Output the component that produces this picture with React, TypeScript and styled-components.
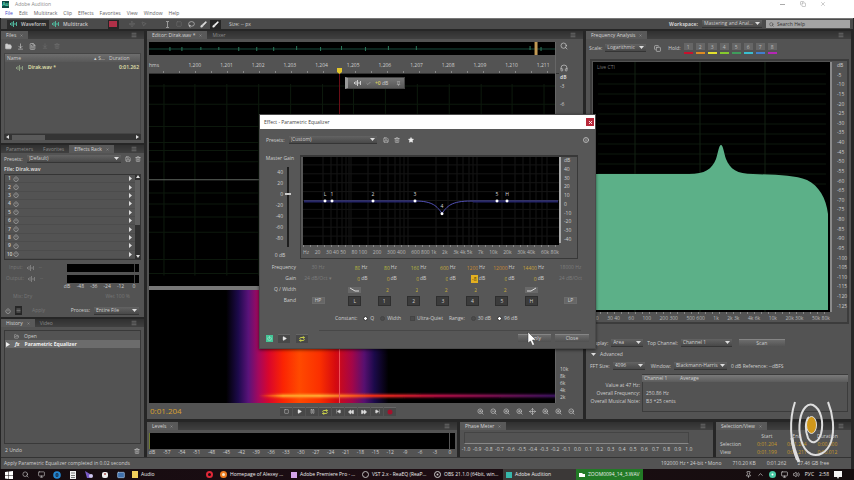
import React from "react";
import styled, { createGlobalStyle, css } from "styled-components";
import {
  ArrowDownToLine, Brush, Check, ChevronUp, Copy, FastForward, FileText, FolderOpen, Headphones, Keyboard,
  Lasso, MousePointer2, Move, Pin, Play, Power, Repeat, Rewind, Save, Search, SkipBack, SkipForward,
  Square, Star, Trash2, Volume2, X, ZoomIn, ZoomOut, Pause, Monitor, Menu, Info,
} from "lucide-react";

const GlobalStyle = createGlobalStyle`
  * { box-sizing: border-box; }
  body { margin: 0; background: #111; overflow: hidden; }
  body, button, input, select, table {
    font-family: "Open Sans", "Noto Sans", sans-serif;
    font-size: 5px;
    line-height: 7px;
    color: #cfcfcf;
  }
  button, input, select { margin: 0; padding: 0; border: 0; background: none; }
  ul, ol { margin: 0; padding: 0; list-style: none; }
  svg { display: block; flex: none; }
`;

const Window = styled.div`
  min-height: 100vh;
  display: flex;
  flex-direction: column;
  background: #262626;
`;

const TitleBar = styled.header`
  display: flex;
  align-items: center;
  gap: 6px;
  height: 8px;
  padding: 0 28px 0 2px;
  background: #fff;
  color: #8a8a8a;
`;

const AppMark = styled.span`
  width: 7px;
  height: 7px;
  background: #0d4a44;
  color: #58d6b4;
  font-weight: 700;
  text-align: center;
`;

const WindowButtons = styled.div`
  display: flex;
  gap: 14px;
  margin-left: auto;
`;

const WindowButton = styled.button`
  width: 6px;
  height: 6px;
  color: #999;
`;

const MenuBar = styled.nav`
  display: flex;
  align-items: center;
  gap: 6px;
  height: 10px;
  padding: 0 5px;
  background: #fff;
`;

const MenuLink = styled.a<{ $first?: boolean }>`
  color: ${(p) => (p.$first ? "#4a4ac8" : "#606060")};
  text-decoration: none;
`;

const Toolbar = styled.div`
  display: flex;
  align-items: center;
  height: 11px;
  margin: 0 1px 2px;
  padding: 0 3px 0 6px;
  border-top: 1px solid #777;
  background: #4b4b4b;
`;

const ModeButton = styled.button<{ $on?: boolean }>`
  display: flex;
  align-items: center;
  gap: 3px;
  height: 9px;
  padding: 0 3px;
  background: ${(p) => (p.$on ? "#2c2c2c" : "transparent")};
  font-weight: 600;
  color: #c8c8c8;
`;

const ToolGroup = styled.div<{ $before?: number }>`
  display: flex;
  align-items: center;
  gap: 1px;
  margin-left: ${(p) => p.$before ?? 0}px;
`;

const ToolButton = styled.button<{ $on?: boolean; $dim?: boolean; $w?: number }>`
  display: flex;
  align-items: center;
  justify-content: center;
  width: ${(p) => p.$w ?? 11}px;
  height: 9px;
  background: ${(p) => (p.$on ? "#262626" : "transparent")};
  color: ${(p) => (p.$dim ? "#737373" : "#d2d2d2")};
`;

const SearchField = styled.label`
  display: flex;
  align-items: center;
  gap: 3px;
  width: 84px;
  height: 8px;
  padding: 0 3px;
  background: #a4a4a4;
  color: #333;
  input { width: 100%; color: #222; outline: none; }
  input::placeholder { color: #333; opacity: 1; }
`;

const Right = styled.div`
  display: flex;
  align-items: center;
  gap: 4px;
  margin-left: auto;
`;

const Workspace = styled.main`
  flex: 1;
  display: flex;
  gap: 3px;
  padding: 0 3px 0 1px;
`;

const Sidebar = styled.div`
  display: flex;
  flex-direction: column;
  gap: 2px;
  flex: 0 0 143px;
`;

const Stage = styled.div`
  flex: 1;
  display: flex;
  flex-direction: column;
  gap: 3px;
  min-width: 0;
`;

const Split = styled.div<{ $grow?: boolean }>`
  display: flex;
  gap: 3px;
  flex: ${(p) => (p.$grow ? "1" : "none")};
  min-height: 0;
`;

const Panel = styled.section<{ $grow?: number; $basis?: number }>`
  display: flex;
  flex-direction: column;
  flex: ${(p) => p.$grow ?? 0} 0 ${(p) => p.$basis ?? 0}px;
  min-width: 0;
  min-height: 0;
  background: #535353;
`;

const TabStrip = styled.div`
  display: flex;
  align-items: stretch;
  flex: none;
  height: 8px;
  padding-right: 7px;
  background: linear-gradient(#303030, #404040);
`;

const Tab = styled.button<{ $on?: boolean }>`
  display: flex;
  align-items: center;
  gap: 4px;
  padding: 0 5px;
  background: ${(p) => (p.$on ? "#595959" : "transparent")};
  color: ${(p) => (p.$on ? "#d4d4d4" : "#8a8a8a")};
`;

const PanelMenu = styled.button`
  margin-left: auto;
  color: #999;
`;

const Row = styled.div<{ $h?: number; $gap?: number; $pad?: string; $dim?: boolean }>`
  display: flex;
  align-items: center;
  flex: none;
  height: ${(p) => p.$h ?? 10}px;
  gap: ${(p) => p.$gap ?? 4}px;
  padding: ${(p) => p.$pad ?? "0 4px"};
  color: ${(p) => (p.$dim ? "#777" : "inherit")};
`;

const SelectBox = styled.span<{ $w: number }>`
  display: inline-grid;
  width: ${(p) => p.$w}px;
  height: 8px;
  align-items: center;
  border-bottom: 1px solid #353535;
  background: linear-gradient(#636363, #484848);
  select {
    grid-area: 1 / 1;
    width: 100%;
    padding-left: 2px;
    appearance: none;
    outline: none;
    color: #cfcfcf;
  }
  svg {
    grid-area: 1 / 1;
    justify-self: end;
    margin-right: 2px;
    pointer-events: none;
  }
`;

const FileTable = styled.table`
  flex: 1;
  display: flex;
  flex-direction: column;
  margin: 0 3px;
  border: 1px solid #454545;
  text-align: left;
  tr { display: grid; grid-template-columns: 1fr 15px 31px; align-items: center; }
  th, td { padding: 0; font-weight: 400; }
  thead tr { height: 8px; background: linear-gradient(#6e6e6e, #585858); }
  th:first-child { padding-left: 2px; }
  tbody tr { height: 11px; color: #e3e2ae; }
  tbody td { font-weight: 600; }
  td:first-child { display: flex; gap: 4px; align-items: center; padding-left: 11px; }
  td:last-child { text-align: right; padding-right: 1px; }
`;

const ScrollTrack = styled.div`
  display: flex;
  justify-content: space-between;
  align-items: center;
  flex: none;
  height: 6px;
  margin: 0 3px 3px;
  padding: 0 2px;
  background: #343434;
`;

const ScrollThumb = styled.span`
  flex: 0 0 33px;
  height: 5px;
  margin: 0 auto 0 3px;
  background: #5a5a5a;
`;

const Rack = styled.div`
  display: grid;
  grid-template-columns: 1fr 5px;
  flex: none;
  height: 86px;
  margin: 0 3px;
  border: 1px solid #343434;
`;

const RackList = styled.ol`
  display: grid;
  grid-template-rows: repeat(10, 1fr);
`;

const RackRow = styled.li`
  display: grid;
  grid-template-columns: 7px 8px 1fr 6px;
  align-items: center;
  padding-left: 1px;
  border-bottom: 1px solid #4c4c4c;
  font-weight: 600;
  span { text-align: center; }
`;

const RackScroll = styled.div`
  display: flex;
  flex-direction: column;
  justify-content: space-between;
  align-items: center;
  background: #303030;
`;

const RackThumb = styled.span`
  width: 5px;
  height: 45px;
  margin: 1px 0 auto;
  background: #606060;
`;

const MeterBar = styled.span`
  flex: 0 0 73px;
  height: 8px;
  margin-left: auto;
  border-right: 1px solid #555;
  background: #000;
  box-shadow: inset -4px 0 0 #000, inset -5px 0 0 #444;
`;

const ScaleRow = styled.div<{ $ml?: number; $mr?: number; $h?: number }>`
  display: flex;
  justify-content: space-between;
  flex: none;
  height: ${(p) => p.$h ?? 7}px;
  margin: 0 ${(p) => p.$mr ?? 0}px 0 ${(p) => p.$ml ?? 0}px;
  span { width: 0; display: flex; justify-content: center; white-space: nowrap; }
`;

const HistoryList = styled.ul`
  flex: 1;
  margin: 3px 3px 0;
  padding-top: 1px;
  border: 1px solid #393939;
`;

const HistoryItem = styled.li<{ $on?: boolean }>`
  display: flex;
  align-items: center;
  gap: 5px;
  height: 8px;
  padding-left: ${(p) => (p.$on ? 1 : 9)}px;
  background: ${(p) => (p.$on ? "#6c6c6c" : "transparent")};
  font-weight: ${(p) => (p.$on ? 700 : 400)};
  color: ${(p) => (p.$on ? "#f0f0f0" : "#cfcfcf")};
`;

const EditorGrid = styled.div`
  flex: 1;
  display: grid;
  grid-template-columns: 1fr 28px;
  grid-template-rows: 13px 19px 211fr 4px 113fr;
  padding: 3px 0 0 2px;
  min-height: 0;
`;

const Overview = styled.div`
  background: #000;
  min-width: 0;
  contain: size;
  svg { width: 100%; height: 13px; }
`;

const Ruler = styled.div`
  display: flex;
  align-items: flex-end;
  margin-right: -4px;
  padding-bottom: 4px;
  background: repeating-linear-gradient(90deg, transparent 0 14px, #888 14px 15px, transparent 15px 16px) 0 100% / 100% 2px no-repeat;
  border-bottom: 1px solid #333;
  span { flex: 1; text-align: center; }
  span:first-child { flex: 0 0 30px; text-align: left; }
`;

const Canvas = styled.div`
  min-width: 0;
  min-height: 0;
  background: #000;
  overflow: hidden;
  contain: size;
  svg { width: 100%; height: 100%; }
`;

const Divider = styled.div`
  grid-column: 1 / 2;
  background: #777;
`;

const SideCell = styled.div<{ $end?: boolean }>`
  display: flex;
  flex-direction: column;
  align-items: flex-start;
  justify-content: ${(p) => (p.$end ? "flex-end" : "flex-start")};
  gap: ${(p) => (p.$end ? 0 : 2)}px;
  padding: 0 0 2px 4px;
  border-left: 1px solid #666;
`;

const TransportBar = styled.div`
  display: flex;
  align-items: center;
  flex: none;
  height: 16px;
  padding: 0 6px 0 3px;
`;

const Time = styled.output`
  flex: 0 0 130px;
  font-size: 8px;
  line-height: 10px;
  color: #d9a030;
`;

const KeyButton = styled.button`
  display: flex;
  align-items: center;
  justify-content: center;
  width: 12px;
  height: 9px;
  margin-right: 1px;
  background: #484848;
  border-top: 1px solid #666;
  color: #dadada;
`;

const Hud = styled.div`
  position: absolute;
  left: 345px;
  top: 77px;
  width: 60px;
  height: 12px;
  display: flex;
  align-items: center;
  gap: 4px;
  padding: 0 3px 0 6px;
  border: 1px solid #444;
  border-left: 3px solid #999;
  background: linear-gradient(#757575, #585858);
  b { color: #d8c860; font-weight: 600; }
`;

const PlayheadMark = styled.svg`
  position: absolute;
  left: 337px;
  top: 68px;
`;

const AnalysisFrame = styled.div`
  flex: 1;
  display: grid;
  grid-template-columns: 1fr 17px;
  grid-template-rows: 1fr 10px;
  margin: 2px 2px 0 4px;
  padding: 1px 0 0 1px;
  border: 2px solid #3c3c3c;
  min-height: 0;
`;

const DbScale = styled.div`
  display: flex;
  flex-direction: column;
  justify-content: space-between;
  padding: 0 0 3px 5px;
  border-left: 2px solid #8a8a8a;
  line-height: 6px;
  min-height: 0;
`;

const Swatch = styled.button<{ $c: string }>`
  width: 9px;
  margin-right: 2px;
  border-bottom: 2px solid ${(p) => p.$c};
  background: linear-gradient(#666 7px, #535353 7px);
  background-clip: padding-box;
  line-height: 9px;
  color: #bbb;
`;

const PushButton = styled.button<{ $w: number }>`
  width: ${(p) => p.$w}px;
  height: 8px;
  border-top: 1px solid #858585;
  background: linear-gradient(#6c6c6c, #515151);
`;

const ReadoutTable = styled.table`
  display: flex;
  flex-direction: column;
  flex: none;
  margin: 2px 3px 0 2px;
  tr { display: grid; grid-template-columns: 54px 36px 1fr; height: 8px; }
  th, td { padding: 0; font-weight: 400; text-align: left; white-space: nowrap; }
  tbody th { padding-right: 2px; text-align: right; }
  thead th { padding-left: 2px; background: linear-gradient(#7a7a7a, #5c5c5c); border-top: 1px solid #3c3c3c; }
  thead th:first-child { background: none; border: 0; }
  td { padding-left: 3px; }
  td:nth-child(2) { border-left: 1px solid #3c3c3c; }
  td:last-child { border-right: 1px solid #3c3c3c; }
  tbody tr:last-child { height: 14px; }
  tbody tr:last-child td { border-bottom: 1px solid #3c3c3c; }
`;

const LevelMeter = styled.div`
  height: 16px;
  margin: 3px 2px 0;
  border-left: 1px solid #6e7a2a;
  background: linear-gradient(90deg, transparent calc(100% - 6px), #555 calc(100% - 6px) calc(100% - 5px), transparent calc(100% - 5px)) #000;
`;

const PhaseTrack = styled.div`
  height: 12px;
  margin: 2px 24px 2px 4px;
  border: 1px solid #444;
  border-bottom-color: #888;
`;

const SelectionTable = styled.table`
  margin: 2px 8px 0 4px;
  border-spacing: 0;
  th, td { padding: 0; height: 8px; font-weight: 400; text-align: center; }
  tbody th { text-align: left; }
  td { color: #c79a2c; }
`;

const StatusBar = styled.footer`
  display: flex;
  align-items: center;
  gap: 11px;
  flex: none;
  height: 12px;
  margin: 0 3px 0 1px;
  padding: 0 22px 0 3px;
  border-top: 1px solid #333;
  background: #535353;
  span:first-child { margin-right: auto; }
`;

const Taskbar = styled.nav`
  display: flex;
  align-items: center;
  flex: none;
  height: 11px;
  padding-left: 1px;
  background: linear-gradient(90deg, #150c10, #1d0d13 50%, #140d0e);
  color: #e8e8e8;
`;

const TaskIcon = styled.button`
  display: flex;
  justify-content: center;
  align-items: center;
  flex: 0 1 auto;
  width: 16px;
  height: 11px;
`;

const TaskButton = styled.button<{ $w: number; $bg?: string }>`
  display: flex;
  align-items: center;
  gap: 3px;
  flex: 0 0 ${(p) => p.$w}px;
  height: 11px;
  padding: 0 3px;
  background: ${(p) => p.$bg ?? "transparent"};
  color: #eee;
  white-space: nowrap;
`;

const Tray = styled.div`
  display: flex;
  align-items: center;
  gap: 5px;
  margin-left: auto;
  padding-right: 12px;
`;

const Dialog = styled.section`
  position: absolute;
  left: 260px;
  top: 115px;
  width: 335px;
  display: flex;
  flex-direction: column;
  background: #575757;
  box-shadow: 0 0 0 1px #4a4a4a, 0 1px 3px 1px rgba(0, 0, 0, 0.6);
`;

const DialogTitle = styled.header`
  display: flex;
  align-items: center;
  justify-content: space-between;
  height: 14px;
  padding: 0 1px 0 4px;
  background: #fff;
  color: #444;
`;

const CloseBox = styled.button`
  display: flex;
  align-items: center;
  justify-content: center;
  width: 8px;
  height: 8px;
  background: #b8283a;
  color: #fff;
`;

const EqBody = styled.div`
  display: grid;
  grid-template-columns: 40px 1fr 17px;
  margin-top: 4px;
`;

const GainColumn = styled.div`
  display: flex;
  flex-direction: column;
  align-items: center;
  height: 104px;
  span { white-space: nowrap; }
`;

const GainTrack = styled.div`
  flex: 1;
  display: grid;
  grid-template-columns: 16px 6px;
  margin-top: 5px;
`;

const GainLabels = styled.div`
  display: flex;
  flex-direction: column;
  justify-content: space-between;
  padding: 2px 2px 10px 0;
  text-align: right;
`;

const VerticalRange = styled.input`
  writing-mode: vertical-lr;
  direction: rtl;
  appearance: none;
  width: 6px;
  height: 80px;
  background: linear-gradient(90deg, transparent 2px, #1e1e1e 2px 4px, transparent 4px);
  &::-webkit-slider-thumb {
    appearance: none;
    width: 6px;
    height: 2px;
    background: #ccc;
  }
`;

const EqFrame = styled.div`
  display: grid;
  grid-template-columns: 1fr 18px;
  grid-template-rows: 88px 11px;
  padding: 0 0 0 2px;
  border: 1px solid #383838;
  border-top-width: 2px;
`;

const EqScale = styled.div`
  display: flex;
  flex-direction: column;
  justify-content: space-between;
  height: 86px;
  padding-left: 3px;
  border-left: 2px solid #aaa;
  text-align: left;
`;

const Axis = styled.div`
  display: flex;
  align-items: flex-end;
  justify-content: space-between;
  white-space: nowrap;
  color: #b8b8b8;
  background: repeating-linear-gradient(90deg, #888 0 1px, transparent 1px 7px) 0 0 / 100% 2px no-repeat;
`;

const BandGrid = styled.div`
  display: grid;
  grid-template-columns: 36px 44px repeat(7, 1fr) 49px;
  grid-auto-rows: 11px;
  align-items: center;
  margin-top: 3px;
`;

const RowLabel = styled.span`
  text-align: right;
`;

const Cell = styled.span<{ $mid?: boolean; $dim?: boolean }>`
  display: flex;
  align-items: center;
  justify-content: ${(p) => (p.$mid ? "center" : "flex-end")};
  gap: 1px;
  padding-right: ${(p) => (p.$mid ? 0 : 2)}px;
  color: ${(p) => (p.$dim ? "#7d7d7d" : "#cfcfcf")};
`;

const ValueInput = styled.input<{ $hot?: boolean; $tone?: string; $narrow?: boolean }>`
  width: ${(p) => (p.$narrow || p.$hot ? 7 : 18)}px;
  height: 8px;
  text-align: ${(p) => (p.$hot ? "center" : "right")};
  outline: none;
  color: ${(p) => p.$tone ?? "#c8ad3c"};
  ${(p) => p.$hot && css`
    background: #e3b021;
    color: #4d3a05;
  `}
`;

const BandButton = styled.button<{ $light?: boolean }>`
  width: 13px;
  height: ${(p) => (p.$light ? 7 : 10)}px;
  border: 1px solid ${(p) => (p.$light ? "#6c6c6c" : "#2e2e2e")};
  background: ${(p) => (p.$light ? "#666" : "#3b3b3b")};
  line-height: ${(p) => (p.$light ? 5 : 8)}px;
`;

const ChoiceRow = styled.div`
  display: flex;
  align-items: center;
  height: 24px;
  gap: 6px;
  padding-left: 75px;
`;

const ChoiceGroup = styled.div`
  display: flex;
  align-items: center;
  gap: 6px;
  margin-right: 3px;
`;

const Option = styled.label`
  display: flex;
  align-items: center;
  gap: 2px;
  white-space: nowrap;
  input {
    appearance: none;
    width: 5px;
    height: 5px;
    border: 1px solid #444;
    background: #4b4b4b;
  }
  input[type="radio"] { border-radius: 50%; }
  input:checked { background: radial-gradient(#fff 1px, #333 2px); }
`;

const DialogFoot = styled.div`
  display: flex;
  align-items: center;
  gap: 5px;
  height: 14px;
  margin: 0 6px 3px;
`;

const FootLine = styled.hr`
  width: 262px;
  margin: 0 14px 0 auto;
  border: 0;
  border-top: 1px solid #484848;
`;

const PowerButton = styled.button`
  display: flex;
  align-items: center;
  justify-content: center;
  width: 7px;
  height: 7px;
  background: #45c596;
  color: #e4fff5;
`;

const Cursor = styled.svg`
  position: absolute;
  left: 527px;
  top: 332px;
`;

const Emblem = styled.svg`
  position: absolute;
  right: 19px;
  bottom: 16px;
`;

function Arrow() {
  return <svg width="5" height="3" viewBox="0 0 5 3"><path d="M0 0h5L2.5 3z" fill="#ddd" /></svg>;
}

function Chooser({ label, value, w }: { label: string; value: string; w: number }) {
  return (
    <SelectBox $w={w}>
      <select aria-label={label} defaultValue={value}><option>{value}</option></select>
      <Arrow />
    </SelectBox>
  );
}

function Tabs({ items, active }: { items: string[]; active: number }) {
  return (
    <TabStrip role="tablist">
      {items.map((t, i) => (
        <Tab key={t} role="tab" aria-selected={i === active} $on={i === active}>{t}{i === active && <X size={3} />}</Tab>
      ))}
      <PanelMenu aria-label="Panel menu"><Menu size={6} /></PanelMenu>
    </TabStrip>
  );
}

function WaveIcon({ color = "#4fb59b" }: { color?: string }) {
  return <svg width="8" height="6" viewBox="0 0 8 6"><path d="M.5 2v2M2 1v4M3.500 0v6M5 2v2M6.500 1v4" stroke={color} /></svg>;
}

function FilesPanel() {
  return (
    <Panel $basis={112}>
      <Tabs items={["Files"]} active={0} />
      <Row $h={14} $gap={1} $pad="0 2px">
        <ToolButton aria-label="Open"><FolderOpen size={7} fill="#ccc" /></ToolButton>
        <ToolButton aria-label="Import"><ArrowDownToLine size={7} /></ToolButton>
        <ToolButton aria-label="New"><FileText size={7} /></ToolButton>
        <ToolButton aria-label="Insert" $dim><ArrowDownToLine size={6} /></ToolButton>
        <ToolButton aria-label="Delete" $dim><Trash2 size={6} /></ToolButton>
      </Row>
      <FileTable>
        <thead><tr><th>Name</th><th>▴ S…</th><th>Duration</th></tr></thead>
        <tbody><tr><td><WaveIcon color="#8a9a80" />Dirak.wav *</td><td /><td>0:01.262</td></tr></tbody>
      </FileTable>
      <ScrollTrack>
        <svg width="3" height="4"><path d="M3 0v4L0 2z" fill="#ddd" /></svg>
        <ScrollThumb />
        <svg width="3" height="4"><path d="M0 0v4l3-2z" fill="#ddd" /></svg>
      </ScrollTrack>
    </Panel>
  );
}

function RackPanel() {
  return (
    <Panel $basis={172}>
      <Tabs items={["Parameters", "Favorites", "Effects Rack"]} active={2} />
      <Row $h={12} $pad="0 3px" $gap={4}>
        Presets:
        <Chooser label="Presets" value="(Default)" w={94} />
        <Save size={6} /><Trash2 size={6} />
      </Row>
      <Row $h={9} $pad="0 3px"><b>File: Dirak.wav</b></Row>
      <Rack>
        <RackList>
          {Array.from({ length: 10 }, (_, i) => (
            <RackRow key={i}>
              <span>{i + 1}</span><Power size={6} />
              <i /><svg width="3" height="5"><path d="M0 0v5l3-2.500z" fill="#ddd" /></svg>
            </RackRow>
          ))}
        </RackList>
        <RackScroll>
          <svg width="4" height="4"><path d="M0 3h4L2 0z" fill="#ddd" /></svg>
          <RackThumb />
          <svg width="4" height="4"><path d="M0 0h4L2 3z" fill="#ddd" /></svg>
        </RackScroll>
      </Rack>
      <Row $h={12} $dim $pad="3px 4px 0 8px">Input: <WaveIcon color="#7d7d7d" /> --<MeterBar /></Row>
      <Row $h={11} $dim $pad="2px 4px 0 5px">Output: <WaveIcon color="#7d7d7d" /> --<MeterBar /></Row>
      <ScaleRow $ml={66} $mr={10} $h={9}>{["dB", "-48", "-36", "-24", "-12", "0"].map((v) => <span key={v}>{v}</span>)}</ScaleRow>
      <Row $h={8} $dim $pad="0 14px 0 12px" $gap={10}>Mix: Dry<Right>Wet 100 %</Right></Row>
      <Row $h={21} $pad="0 5px 0 4px" $gap={4}>
        <Power size={6} />
        <ToolButton $on $w={7} aria-label="Toggle rack"><Menu size={5} /></ToolButton>
        <Row $dim $pad="0 0 0 6px">Apply</Row>
        <Right>Process:<Chooser label="Process" value="Entire File" w={45} /></Right>
      </Row>
    </Panel>
  );
}

function HistoryPanel() {
  return (
    <Panel $grow={1}>
      <Tabs items={["History", "Video"]} active={0} />
      <HistoryList>
        <HistoryItem><FolderOpen size={5} />Open</HistoryItem>
        <HistoryItem $on><svg width="4" height="5"><path d="M0 0v5l4-2.500z" fill="#eee" /></svg><i>fx</i>Parametric Equalizer</HistoryItem>
      </HistoryList>
      <Row $h={13}>2 Undo<Right><Trash2 size={6} /></Right></Row>
    </Panel>
  );
}

function Editor() {
  const xs = [15, 46, 78, 110, 142, 174, 205, 237, 269, 301, 333, 364, 396];
  const ys = [12, 30, 52, 68, 76, 87, 118, 129, 142, 157, 184, 198];
  const zooms = [ZoomIn, ZoomOut, ZoomIn, ZoomIn, Move, ZoomIn, ZoomIn, ZoomOut];
  return (
    <Panel $grow={1}>
      <Tabs items={["Editor: Dirak.wav *", "Mixer"]} active={0} />
      <EditorGrid>
        <Overview>
          <svg viewBox="0 0 407 13" preserveAspectRatio="none">
            <path d="M0 7h407" stroke="#194b3d" />
            <path d="M21 5v4M33 5v4M52 5v3M70 5v3M90 5v4M108 5v4M125 5v4M148 4v4M172 5v4M193 4v4M217 5v4M240 4v4M268 4v4M382 4v4M393 5v4" stroke="#2d7a5c" />
            <path d="M388 0v13" stroke="#c29a55" strokeWidth="3" />
          </svg>
        </Overview>
        <SideCell><Search size={8} /></SideCell>
        <Ruler>{["hms", "1,200", "1,201", "1,202", "1,203", "1,204", "1,205", "1,206", "1,207", "1,208", "1,209", "1,210", "1,211"].map((v) => <span key={v}>{v}</span>)}</Ruler>
        <SideCell $end><Headphones size={8} /></SideCell>
        <Canvas>
          <svg viewBox="0 0 407 210" preserveAspectRatio="none">
            {xs.map((x) => <path key={x} d={`M${x} 10v190`} stroke="#0d1a0d" />)}
            {ys.map((y) => <path key={y} d={`M0 ${y}h407`} stroke="#0c180c" />)}
            <path d="M0 105h407" stroke="#5f665f" />
            <path d="M191 0v210" stroke="#6e0f18" />
          </svg>
        </Canvas>
        <SideCell><b>dB</b><span>-3</span><br /><span>-6</span></SideCell>
        <Divider /><span />
        <Canvas>
          <svg viewBox="0 0 407 113" preserveAspectRatio="none">
            <defs>
              <linearGradient id="heat">
                <stop offset=".19" stopColor="#000" />
                <stop offset=".22" stopColor="#1d0a4c" />
                <stop offset=".245" stopColor="#5a137a" />
                <stop offset=".27" stopColor="#a5085c" />
                <stop offset=".295" stopColor="#d9062c" />
                <stop offset=".33" stopColor="#fb2403" />
                <stop offset=".37" stopColor="#ff4a00" />
                <stop offset=".42" stopColor="#fb3000" />
                <stop offset=".46" stopColor="#d50a10" />
                <stop offset=".5" stopColor="#a40648" />
                <stop offset=".53" stopColor="#571070" />
                <stop offset=".555" stopColor="#1b0a4a" />
                <stop offset=".59" stopColor="#000" />
              </linearGradient>
              <linearGradient id="streak">
                <stop offset=".27" stopColor="#ff5000" stopOpacity="0" />
                <stop offset=".33" stopColor="#ffa428" />
                <stop offset=".42" stopColor="#ffae32" />
                <stop offset=".55" stopColor="#f93012" />
                <stop offset=".72" stopColor="#b50c46" />
                <stop offset="1" stopColor="#3c1460" />
              </linearGradient>
              <filter id="soft" x="0" y="-2" width="1" height="5"><feGaussianBlur stdDeviation="0 1" /></filter>
            </defs>
            <rect width="407" height="113" fill="url(#heat)" />
            <rect y="104" width="407" height="3" fill="url(#streak)" filter="url(#soft)" />
            <rect y="105" width="407" height="1" fill="url(#streak)" />
            <path d="M191 0v113" stroke="#f2545a" />
          </svg>
        </Canvas>
        <SideCell $end>{["10k", "8k", "6k", "4k", "2k"].map((v) => <span key={v}>{v}</span>)}</SideCell>
      </EditorGrid>
      <TransportBar>
        <Time>0:01.204</Time>
        <KeyButton aria-label="Stop"><Square size={5} /></KeyButton>
        <KeyButton aria-label="Play"><Play size={5} fill="#eee" /></KeyButton>
        <KeyButton aria-label="Pause"><Pause size={5} /></KeyButton>
        <KeyButton aria-label="Loop"><Repeat size={6} color="#c5cc4a" strokeWidth={4} /></KeyButton>
        <KeyButton aria-label="To start"><SkipBack size={5} fill="#ddd" /></KeyButton>
        <KeyButton aria-label="Rewind"><Rewind size={6} fill="#ddd" /></KeyButton>
        <KeyButton aria-label="Fast forward"><FastForward size={6} fill="#ddd" /></KeyButton>
        <KeyButton aria-label="To end"><SkipForward size={5} fill="#ddd" /></KeyButton>
        <KeyButton aria-label="Record"><svg width="6" height="6"><circle cx="3" cy="3" r="2.500" fill="#a3122c" /></svg></KeyButton>
        <Right>
          <ToolGroup>{zooms.map((Z, i) => <ToolButton key={i} $w={12} aria-label={`Zoom ${i + 1}`}><Z size={7} /></ToolButton>)}</ToolGroup>
        </Right>
      </TransportBar>
    </Panel>
  );
}

function AnalysisPanel() {
  const colors = ["#c8102c", "#dd8a22", "#e3e02e", "#86c82e", "#3f9c5c", "#38bfd0", "#3f7fd0", "#b527b5"];
  const db = ["dB", ...Array.from({ length: 25 }, (_, i) => String(-5 * (i + 1)))];
  return (
    <Panel $basis={265}>
      <Tabs items={["Frequency Analysis"]} active={0} />
      <Row $h={18} $pad="0 3px" $gap={3}>
        Scale: <Chooser label="Scale" value="Logarithmic" w={41} />
        <ToolButton $w={16} aria-label="Copy"><Copy size={7} /></ToolButton>
        Hold:
        <ToolGroup>{colors.map((c, i) => <Swatch key={c} $c={c}>{i + 1}</Swatch>)}</ToolGroup>
      </Row>
      <AnalysisFrame>
        <Canvas>
          <svg viewBox="0 0 237 250" preserveAspectRatio="none">
            {Array.from({ length: 12 }, (_, i) => <path key={i} d={`M5 ${12 + i * 10}h228`} stroke="#0c180c" />)}
            <path d="M42 0v250M107 0v250M172 0v250" stroke="#132013" />
            <path d="M0 112H96C112 112 119 107 123 97C125 91 126 83 128 83C130 83 131 91 133 97C137 107 144 112 160 112C184 113 201 113 214 118C226 124 233 136 235 152V248H0z" fill="#5cb088" />
            <text x="4" y="7" fontSize="5" fill="#777">Live CTI</text>
          </svg>
        </Canvas>
        <DbScale>{db.map((v) => <span key={v}>{v}</span>)}</DbScale>
        <Axis>{["20", "30 40", "60", "100", "200 300", "500 600", "1k", "2k 3k", "4k 6k", "10k", "20k 30k", "50k 80k"].map((v) => <span key={v}>{v}</span>)}</Axis>
      </AnalysisFrame>
      <Row $h={24} $pad="14px 4px 0" $gap={3}>
        Display: <Chooser label="Display" value="Area" w={32} />
        <ToolGroup $before={1}>Top Channel:</ToolGroup> <Chooser label="Top Channel" value="Channel 1" w={51} />
        <ToolGroup $before={4}><PushButton $w={46}>Scan</PushButton></ToolGroup>
      </Row>
      <Row $h={12} $pad="0 5px"><Arrow />Advanced</Row>
      <Row $h={12} $pad="0 4px" $gap={3}>
        FFT Size: <Chooser label="FFT Size" value="4096" w={32} />
        <ToolGroup $before={3}>Window:</ToolGroup> <Chooser label="Window" value="Blackmann-Harris" w={53} />
        <ToolGroup $before={1}>0 dB Reference: --dBFS</ToolGroup>
      </Row>
      <ReadoutTable>
        <thead><tr><th /><th>Channel 1</th><th>Average</th></tr></thead>
        <tbody>
          <tr><th>Value at 47 Hz:</th><td /><td /></tr>
          <tr><th>Overall Frequency:</th><td>250.86 Hz</td><td /></tr>
          <tr><th>Overall Musical Note:</th><td>B3 +25 cents</td><td /></tr>
        </tbody>
      </ReadoutTable>
      <Row $h={7} />
    </Panel>
  );
}

function BottomPanels() {
  const levels = ["dB", ...Array.from({ length: 20 }, (_, i) => String(-57 + i * 3))];
  const phase = Array.from({ length: 21 }, (_, i) => (-1 + i * 0.1).toFixed(1).replace("-0.0", "0.0"));
  return (
    <Split>
      <Panel $grow={1}>
        <Tabs items={["Levels"]} active={0} />
        <LevelMeter />
        <ScaleRow $ml={5} $mr={7}>{levels.map((v) => <span key={v}>{v}</span>)}</ScaleRow>
      </Panel>
      <Panel $basis={253}>
        <Tabs items={["Phase Meter"]} active={0} />
        <PhaseTrack />
        <ScaleRow $ml={6} $mr={24} $h={11}>{phase.map((v) => <span key={v}>{v}</span>)}</ScaleRow>
      </Panel>
      <Panel $basis={135}>
        <Tabs items={["Selection/View"]} active={0} />
        <SelectionTable>
          <thead><tr><th /><th>Start</th><th>End</th><th>Duration</th></tr></thead>
          <tbody>
            <tr><th>Selection</th><td>0:01.204</td><td>0:01.204</td><td>0:00.000</td></tr>
            <tr><th>View</th><td>0:01.199</td><td>0:01.211</td><td>0:00.012</td></tr>
          </tbody>
        </SelectionTable>
      </Panel>
    </Split>
  );
}

const bands = [
  { id: "L", hz: "80", tone: "#b9bb3c" },
  { id: "1", hz: "80", tone: "#b9bb3c" },
  { id: "2", hz: "160", tone: "#b9bb3c" },
  { id: "3", hz: "600", tone: "#c8ad3c" },
  { id: "4", hz: "1200", tone: "#c98a34" },
  { id: "5", hz: "12000", tone: "#c98a34" },
  { id: "H", hz: "14400", tone: "#c8a13c" },
];

const nodes: [string, number, number][] = [["L", 22, 44], ["1", 29, 44], ["2", 70, 44], ["3", 112, 44], ["4", 139, 57], ["5", 194, 44], ["H", 204, 44]];

function EqGraph() {
  const vs = [20, 28, 34, 39, 43, 46, 48, 65, 77, 85, 92, 97, 101, 105, 133, 145, 154, 160, 166, 170, 174, 199, 212, 220, 227, 233, 239, 244];
  return (
    <svg viewBox="0 0 256 89" preserveAspectRatio="none">
      {vs.map((x) => <path key={x} d={`M${x} 0v89`} stroke="#161616" />)}
      {Array.from({ length: 9 }, (_, i) => <path key={i} d={`M0 ${8 + i * 9}h256`} stroke="#151515" />)}
      <path d="M1 44.500H112C130 44.500 134 50 139 57C144 50 148 44.500 168 44.500H255" fill="none" stroke="#5453b8" />
      <path d="M1 45.500H114M170 45.500H255" stroke="#23236e" />
      {nodes.map(([id, x, y]) => (
        <g key={id}>
          <circle cx={x} cy={y + 0.5} r="1.500" fill="#fff" />
          <text x={x} y={y - 5} fill="#ddd" fontSize="5" textAnchor="middle">{id}</text>
        </g>
      ))}
    </svg>
  );
}

function EqualizerDialog() {
  return (
    <Dialog role="dialog" aria-label="Effect - Parametric Equalizer">
      <DialogTitle>Effect - Parametric Equalizer<CloseBox aria-label="Close dialog"><X size={5} strokeWidth={4} /></CloseBox></DialogTitle>
      <Row $h={22} $pad="0 6px" $gap={4}>
        Presets: <Chooser label="Preset" value="(Custom)" w={88} />
        <ToolGroup>
          <ToolButton $w={10} aria-label="Save preset"><Save size={6} /></ToolButton>
          <ToolButton $w={10} aria-label="Delete preset"><Trash2 size={6} /></ToolButton>
          <ToolButton $w={16} aria-label="Favorite"><Star size={6} fill="#eee" color="#eee" /></ToolButton>
        </ToolGroup>
        <Right><Info size={6} strokeWidth={3} /></Right>
      </Row>
      <EqBody>
        <GainColumn>
          <span>Master Gain</span>
          <GainTrack>
            <GainLabels>{["40", "20", "0", "-20", "-40", "-60", "-80"].map((v) => <span key={v}>{v}</span>)}</GainLabels>
            <VerticalRange type="range" min={-80} max={40} defaultValue={0} aria-label="Master gain" />
          </GainTrack>
          <span>0 dB</span>
        </GainColumn>
        <EqFrame>
          <Canvas><EqGraph /></Canvas>
          <EqScale>{["dB", "40", "30", "20", "10", "0", "-10", "-20", "-30", "-40"].map((v) => <span key={v}>{v}</span>)}</EqScale>
          <Axis>{["Hz", "20", "30 40 50", "80 100", "200", "300 400", "600 800 1k", "2k", "3k 4k 5k", "7k", "10k", "20k", "30k 40k", "60k 80k"].map((v) => <span key={v}>{v}</span>)}</Axis>
        </EqFrame>
      </EqBody>
      <BandGrid>
        <RowLabel>Frequency</RowLabel>
        <Cell $mid $dim>30 Hz</Cell>
        {bands.map((b) => <Cell key={b.id}><ValueInput aria-label={`Frequency ${b.id}`} defaultValue={b.hz} $tone={b.tone} />Hz</Cell>)}
        <Cell $mid $dim>18000 Hz</Cell>
        <RowLabel>Gain</RowLabel>
        <Cell $mid $dim>24 dB/Oct ▾</Cell>
        {bands.map((b) => <Cell key={b.id}><ValueInput aria-label={`Gain ${b.id}`} defaultValue={b.id === "4" ? "-8" : "0"} $hot={b.id === "4"} $narrow />dB</Cell>)}
        <Cell $mid $dim>24 dB/Oct</Cell>
        <RowLabel>Q / Width</RowLabel>
        <Cell />
        {bands.map((b) => (
          <Cell key={b.id} $mid={b.id === "L" || b.id === "H"}>
            {b.id === "L" || b.id === "H" ? (
              <svg width="13" height="6" viewBox="0 0 13 6"><rect width="13" height="6" fill="#696969" /><path d={b.id === "L" ? "M2 1L7 4H11" : "M2 4H6L11 1"} fill="none" stroke="#ddd" /></svg>
            ) : (
              <><ValueInput aria-label={`Q ${b.id}`} defaultValue="2" $narrow /><svg width="7" height="1" /></>
            )}
          </Cell>
        ))}
        <Cell />
        <RowLabel>Band</RowLabel>
        <Cell $mid><BandButton $light>HP</BandButton></Cell>
        {bands.map((b) => <Cell key={b.id} $mid><BandButton>{b.id}</BandButton></Cell>)}
        <Cell $mid><BandButton $light>LP</BandButton></Cell>
      </BandGrid>
      <ChoiceRow>
        <ChoiceGroup role="radiogroup" aria-label="Constant">Constant:
          <Option><input type="radio" name="constant" defaultChecked />Q</Option>
          <Option><input type="radio" name="constant" />Width</Option>
        </ChoiceGroup>
        <Option><input type="checkbox" />Ultra-Quiet</Option>
        <ChoiceGroup role="radiogroup" aria-label="Range">Range:
          <Option><input type="radio" name="range" />30 dB</Option>
          <Option><input type="radio" name="range" defaultChecked />96 dB</Option>
        </ChoiceGroup>
      </ChoiceRow>
      <FootLine />
      <DialogFoot>
        <PowerButton aria-label="Power"><Power size={5} /></PowerButton>
        <KeyButton aria-label="Preview"><Play size={5} fill="#eee" /></KeyButton>
        <KeyButton aria-label="Loop preview"><Repeat size={6} color="#c5cc4a" strokeWidth={4} /></KeyButton>
        <Right><PushButton $w={33}>Apply</PushButton><PushButton $w={34}>Close</PushButton></Right>
      </DialogFoot>
    </Dialog>
  );
}

function WindowsTaskbar() {
  return (
    <Taskbar aria-label="Taskbar">
      <TaskIcon aria-label="Start"><svg width="8" height="8"><path d="M0 1l3.500-.5V4H0zM4 .5L8 0v4H4zM0 4.500h3.500V8L0 7.500zM4 4.500h4V8.500L4 8z" fill="#fff" /></svg></TaskIcon>
      <TaskIcon aria-label="Search"><Search size={7} /></TaskIcon>
      <TaskIcon aria-label="Task view"><Monitor size={7} /></TaskIcon>
      <TaskIcon aria-label="Browser"><svg width="8" height="8"><circle cx="4" cy="4" r="2.800" fill="none" stroke="#2487d2" strokeWidth="2" /><path d="M1 4h6" stroke="#2487d2" /></svg></TaskIcon>
      <TaskIcon aria-label="Calculator"><svg width="7" height="8"><rect width="6" height="8" fill="#eee" /><path d="M1 2h4M1 4.500h4M1 6.500h4" stroke="#777" /></svg></TaskIcon>
      <TaskIcon aria-label="Media"><svg width="8" height="8"><path d="M0 0l5 3v4H2z" fill="#7a5cc8" /><circle cx="6" cy="5" r="2" fill="#d0c8f0" /></svg></TaskIcon>
      <TaskIcon aria-label="Viewer"><svg width="8" height="8"><rect x="1" y="1" width="6" height="6" rx="2" fill="#eee" /><circle cx="4" cy="3" r="1" fill="#a55" /></svg></TaskIcon>
      <TaskIcon aria-label="Keyboard"><Keyboard size={8} color="#a9c8ec" fill="#3f70ac" /></TaskIcon>
      <TaskButton $w={72}><svg width="6" height="7"><rect width="6" height="7" fill="#f1cf5c" /></svg><span>Audio</span></TaskButton>
      <TaskIcon aria-label="Opera"><svg width="7" height="7"><circle cx="3.500" cy="3.500" r="2.500" fill="none" stroke="#e02838" strokeWidth="2" /></svg></TaskIcon>
      <TaskButton $w={71}><svg width="7" height="7"><circle cx="3.500" cy="3.500" r="3.500" fill="#ee7b20" /><circle cx="3.500" cy="3.500" r="1.500" fill="#f5e9d0" /></svg>Homepage of Alexey …</TaskButton>
      <TaskButton $w={71}><svg width="6" height="6"><rect width="6" height="6" fill="#d4a4e8" /></svg>Adobe Premiere Pro - …</TaskButton>
      <TaskButton $w={72}><svg width="7" height="7"><circle cx="3.500" cy="3.500" r="3" fill="none" stroke="#bbb" /></svg>VST 2.x - ReaEQ (ReaP…</TaskButton>
      <TaskButton $w={72}><svg width="7" height="7"><circle cx="3.500" cy="3.500" r="3" fill="none" stroke="#ccc" /><circle cx="3.500" cy="3.500" r="1" fill="#ccc" /></svg>OBS 21.1.0 (64bit, win…</TaskButton>
      <TaskButton $w={73} $bg="#3b3837"><svg width="6" height="6"><rect width="6" height="6" fill="#37b7ab" /></svg>Adobe Audition</TaskButton>
      <TaskButton $w={66} $bg="#227a26"><svg width="6" height="5"><path d="M0 1h3l1 1h2v3H0z" fill="#fff" /></svg>ZOOM0094_14_3.WAV</TaskButton>
      <Tray>
        <Pin size={7} /><ChevronUp size={7} />
        <svg width="7" height="7"><circle cx="3.500" cy="3.500" r="3.500" fill="#49c9a4" /><circle cx="3.500" cy="3.500" r="1" fill="#fff" /></svg>
        <Monitor size={7} /><Volume2 size={7} /><span>РУС</span><span>2:58</span>
        <svg width="8" height="8"><path d="M0 0h8v6H5L4 8 3 6H0z" fill="#f4f4f4" /></svg>
      </Tray>
    </Taskbar>
  );
}

export default function App() {
  return (
    <Window>
      <GlobalStyle />
      <TitleBar>
        <AppMark>Au</AppMark>Adobe Audition
        <WindowButtons>
          <WindowButton aria-label="Minimize"><svg width="6" height="6"><path d="M0 3.500h5" stroke="#aaa" /></svg></WindowButton>
          <WindowButton aria-label="Restore"><Copy size={6} /></WindowButton>
          <WindowButton aria-label="Close"><X size={6} /></WindowButton>
        </WindowButtons>
      </TitleBar>
      <MenuBar>
        {["File", "Edit", "Multitrack", "Clip", "Effects", "Favorites", "View", "Window", "Help"].map((m, i) => <MenuLink key={m} href="#" $first={i === 0}>{m}</MenuLink>)}
      </MenuBar>
      <Toolbar>
        <ModeButton $on><WaveIcon />Waveform</ModeButton>
        <ModeButton><WaveIcon />Multitrack</ModeButton>
        <ToolGroup $before={17}><ToolButton $on aria-label="Spectral view"><svg width="8" height="6"><rect width="8" height="6" fill="#b03048" /></svg></ToolButton></ToolGroup>
        <ToolGroup $before={8}>
          <ToolButton $dim aria-label="Move"><Move size={6} /></ToolButton>
          <ToolButton $dim aria-label="Razor"><MousePointer2 size={6} /></ToolButton>
        </ToolGroup>
        <ToolGroup $before={12}>
          <ToolButton aria-label="Time selection"><svg width="5" height="7"><path d="M1 .5h3M2.500 0v7M1 6.500h3" stroke="#999" /></svg></ToolButton>
          <ToolButton $dim aria-label="Marquee"><Square size={6} /></ToolButton>
          <ToolButton aria-label="Lasso"><Lasso size={7} /></ToolButton>
          <ToolButton aria-label="Brush"><Brush size={7} fill="#ddd" /></ToolButton>
          <ToolButton $on aria-label="Healing brush"><Brush size={7} fill="#fff" /></ToolButton>
        </ToolGroup>
        <ToolGroup $before={8}>Size: -- px</ToolGroup>
        <Right>
          <b>Workspace:</b>
          <Chooser label="Workspace" value="Mastering and Anal…" w={60} />
          <SearchField><Search size={5} /><input aria-label="Search Help" placeholder="Search Help" /></SearchField>
        </Right>
      </Toolbar>
      <Workspace>
        <Sidebar><FilesPanel /><RackPanel /><HistoryPanel /></Sidebar>
        <Stage>
          <Split $grow><Editor /><AnalysisPanel /></Split>
          <BottomPanels />
        </Stage>
      </Workspace>
      <StatusBar>
        <span>Apply Parametric Equalizer completed in 0.02 seconds</span>
        <span>192000 Hz • 24-bit • Mono</span><span>710.20 KB</span><span>0:01.262</span><span>27.46 GB free</span>
      </StatusBar>
      <WindowsTaskbar />
      <PlayheadMark width="6" height="6"><path d="M0 0h5v4L2.500 6 0 4z" fill="#e2c52a" /></PlayheadMark>
      <Hud><WaveIcon color="#ccc" /><Check size={5} /><span><b>+0</b> dB</span><Right><Pin size={5} /></Right></Hud>
      <EqualizerDialog />
      <Cursor width="9" height="14" viewBox="0 0 9 14"><path d="M1 0v11l2.500-2 2 4.500 2-1L5.500 8H9z" fill="#fff" stroke="#333" strokeWidth=".5" /></Cursor>
      <Emblem width="46" height="64" viewBox="789 400 46 64" fill="none" stroke="#dedede" strokeWidth="2">
        <path d="M795 402C789 420 790 442 797 460" />
        <path d="M792 438C793 447 796 455 799 462" strokeWidth="3" />
        <path d="M828 402C833 414 835 430 831 442C827 453 818 457 811 454C801 449 798 433 800 420C802 408 808 403 813 405C821 409 824 422 821 434C818 443 812 445 808 438C805 431 805 421 809 417" />
        <ellipse cx="811.500" cy="425" rx="5" ry="8.500" fill="#cf971b" strokeWidth="1" />
      </Emblem>
    </Window>
  );
}
